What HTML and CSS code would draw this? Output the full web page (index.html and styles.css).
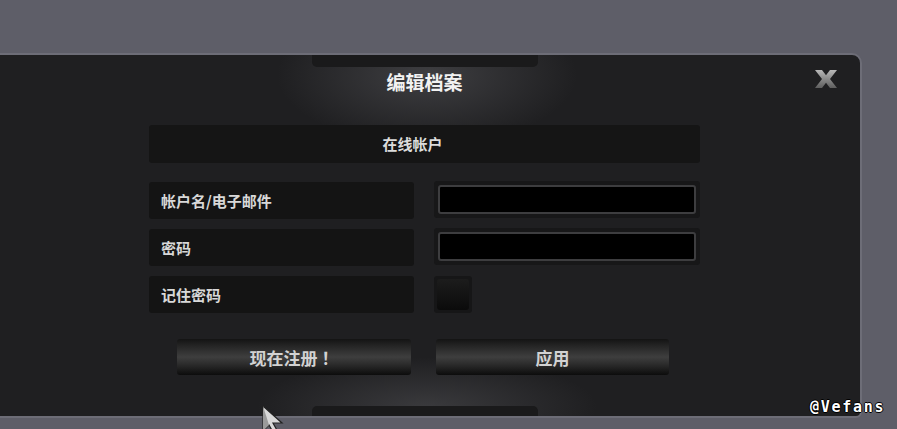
FILE: index.html
```html
<!DOCTYPE html>
<html lang="zh">
<head>
    <meta charset="UTF-8">
    <meta name="viewport" content="width=device-width, initial-scale=1.0">
    <title>编辑档案</title>
    <link rel="stylesheet" href="styles.css">
</head>
<body>

<div class="screen">
    <div class="panel">
        <!-- tombol tutup -->
        <svg class="close" width="22" height="18" viewBox="0 0 22 18">
            <defs>
                <linearGradient id="xg" x1="0" y1="0" x2="0" y2="1">
                    <stop offset="0" stop-color="#b8b8b8"/>
                    <stop offset="0.5" stop-color="#8a8a8a"/>
                    <stop offset="1" stop-color="#5e5e5e"/>
                </linearGradient>
            </defs>
            <path d="M0 0H7L11 5.2L15 0H22L15 9L22 18H15L11 12.8L7 18H0L7 9Z" fill="url(#xg)"/>
        </svg>

        <div class="column">
            <div class="tab tab-top"></div>
            <h1>编辑档案</h1>

            <div class="section-bar">在线帐户</div>

            <div class="rows">
                <div class="row">
                    <div class="label">帐户名/电子邮件</div>
                    <div class="field"><input type="text"></div>
                </div>
                <div class="row">
                    <div class="label">密码</div>
                    <div class="field"><input type="password"></div>
                </div>
                <div class="row">
                    <div class="label">记住密码</div>
                    <div><div class="check"><span></span></div></div>
                </div>
            </div>

            <div class="buttons">
                <button class="btn">现在注册 ！</button>
                <button class="btn">应用</button>
            </div>

            <div class="tab tab-bottom"></div>
        </div>
    </div>

    <svg class="cursor" width="26" height="30" viewBox="0 0 26 30">
        <path d="M1 1 L1 26 L7 20 L12 29 L16 27 L11 18 L20 18 Z" fill="#d8d8d8" stroke="#222" stroke-width="1.2"/>
        <path d="M1 1 L7 20 L1 26 Z" fill="#9a9a9a"/>
    </svg>

    <div class="mark">@Vefans</div>
</div>

</body>
</html>
```

FILE: styles.css
```css
* {
    padding: 0;
    margin: 0;
    box-sizing: border-box;
}

body {
    font-family: "Noto Sans CJK SC", "Noto Sans", sans-serif;
    background-color: #5e5e68;
    overflow: hidden;
}

.screen {
    position: relative;
    width: 897px;
    height: 429px;
    padding-top: 53px;
}

.panel {
    position: relative;
    margin-left: -20px;
    width: 882px;
    height: 365px;
    border: 2px solid #6d6d77;
    border-radius: 0 10px 6px 0;
    background:
        radial-gradient(ellipse 150px 70px at 445px 20px, rgba(120, 120, 125, 0.35), rgba(0, 0, 0, 0) 100%),
        radial-gradient(ellipse 170px 50px at 445px 352px, rgba(120, 120, 125, 0.3), rgba(0, 0, 0, 0) 100%),
        #1f1f21;
    padding-left: 167px;
}

.column {
    width: 551px;
    display: flex;
    flex-direction: column;
}

.tab {
    width: 226px;
    height: 12px;
    margin-left: 163px;
    background-color: #1a1a1b;
}

.tab-top {
    border-radius: 0 0 5px 5px;
}

.tab-bottom {
    height: 10px;
    margin-top: 31px;
    border-radius: 5px 5px 0 0;
}

h1 {
    height: 30px;
    line-height: 30px;
    text-align: center;
    font-size: 19px;
    font-weight: bold;
    color: #f2f2f2;
}

.section-bar {
    margin-top: 28px;
    height: 38px;
    line-height: 38px;
    background-color: #151515;
    border-radius: 3px;
    text-align: center;
    padding-right: 24px;
    font-size: 15px;
    font-weight: bold;
    color: #dcdcdc;
}

.rows {
    margin-top: 19px;
    display: flex;
    flex-direction: column;
    gap: 10px;
}

.row {
    display: grid;
    grid-template-columns: 265px 266px;
    gap: 20px;
    height: 37px;
}

.label {
    background-color: #141414;
    border-radius: 3px;
    padding-left: 12px;
    line-height: 37px;
    font-size: 15px;
    font-weight: bold;
    color: #d8d8d8;
}

.field {
    margin-top: -1px;
    height: 37px;
    padding: 4px;
    background-color: #171718;
    border-radius: 3px;
}

.field input {
    display: block;
    width: 100%;
    height: 29px;
    background-color: #000;
    border: 2px solid #3d3d3f;
    border-radius: 3px;
    outline: none;
}

.check {
    width: 38px;
    height: 37px;
    padding: 3px;
    background-color: #161617;
    border-radius: 3px;
}

.check span {
    display: block;
    width: 100%;
    height: 100%;
    border-radius: 3px;
    background: linear-gradient(#1c1c1c, #0b0b0b);
}

.buttons {
    margin-top: 26px;
    margin-left: 28px;
    display: flex;
    gap: 25px;
}

.btn {
    width: 234px;
    height: 36px;
    border: none;
    border-radius: 3px;
    background: linear-gradient(#141414 0%, #2e2e2e 30%, #3e3e3e 50%, #2a2a2a 72%, #0c0c0c 100%);
    font-family: "Noto Sans CJK SC", "Noto Sans", sans-serif;
    font-size: 17px;
    font-weight: bold;
    color: #d2d2d2;
}

.btn + .btn {
    width: 233px;
}

.close {
    position: absolute;
    top: 15px;
    right: 23px;
}

.cursor {
    position: absolute;
    left: 262px;
    top: 405px;
}

.mark {
    position: absolute;
    left: 810px;
    top: 398px;
    font-family: "DejaVu Sans Mono", monospace;
    font-size: 15px;
    font-weight: bold;
    letter-spacing: 1.7px;
    color: #fff;
    text-shadow: 1px 0 0 #000, -1px 0 0 #000, 0 1px 0 #000, 0 -1px 0 #000;
}
```
